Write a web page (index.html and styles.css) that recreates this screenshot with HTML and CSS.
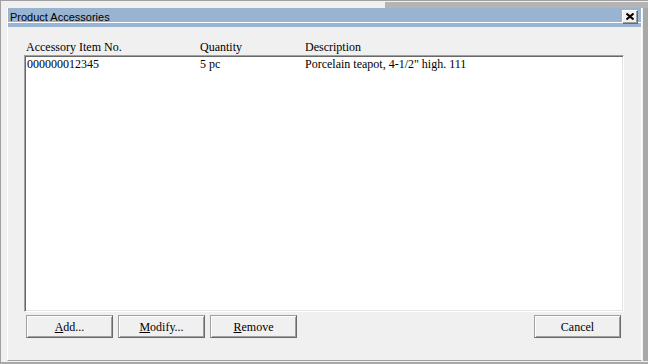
FILE: index.html
```html
<!DOCTYPE html>
<html>
<head>
<meta charset="utf-8">
<link rel="stylesheet" href="styles.css">
</head>
<body>
<div class="screen">
  <div class="topstrip"><div class="topgray"></div></div>
  <div class="row">
    <div class="win">
      <div class="titlebar">
        <span class="title">Product Accessories</span>
        <div class="close"><svg width="8" height="7" viewBox="0 0 8 7"><path d="M0.5 0.5 L7.5 6.5 M7.5 0.5 L0.5 6.5" stroke="#000" stroke-width="2" fill="none"/></svg></div>
      </div>
      <div class="content">
        <div class="cols head">
          <span class="c1">Accessory Item No.</span>
          <span class="c2">Quantity</span>
          <span class="c3">Description</span>
        </div>
        <div class="listbox">
          <div class="cols item">
            <span class="c1">000000012345</span>
            <span class="c2">5 pc</span>
            <span class="c3">Porcelain teapot, 4-1/2" high. 111</span>
          </div>
        </div>
        <div class="buttons">
          <button class="btn"><u>A</u>dd...</button>
          <button class="btn"><u>M</u>odify...</button>
          <button class="btn"><u>R</u>emove</button>
          <span class="spacer"></span>
          <button class="btn">Cancel</button>
        </div>
      </div>
    </div>
    <div class="rightband"></div>
  </div>
</div>
</body>
</html>
```

FILE: styles.css
```css
html, body {
  margin: 0;
  padding: 0;
  background: #f0f0f0;
}

.screen {
  width: 648px;
  height: 364px;
  box-sizing: border-box;
  border-top: 1px solid #a0a0a0;
  border-left: 1px solid #a0a0a0;
  border-bottom: 2px solid #a8a8a8;
  display: flex;
  flex-direction: column;
  overflow: hidden;
}

.topstrip {
  height: 7px;
  display: flex;
}

.topgray {
  margin-left: 384px;
  margin-top: 1px;
  flex: 1;
  background: #b4b4b4;
}

.row {
  display: flex;
  height: 353px;
}

.win {
  margin-left: 6px;
  margin-right: 1px;
  width: 633px;
  border-left: 1px solid #ffffff;
  border-right: 1px solid #ffffff;
  border-bottom: 1px solid #a0a0a0;
  display: flex;
  flex-direction: column;
}

.rightband {
  width: 5px;
  background: #a8a8a8;
}

.titlebar {
  height: 19px;
  background: linear-gradient(to bottom, #99b4d1 0, #99b4d1 14px, #ffffff 14px, #ffffff 15px, #99b4d1 15px);
  display: flex;
  align-items: flex-start;
}

.title {
  font-family: "Liberation Sans", Arial, sans-serif;
  font-size: 11px;
  line-height: 13px;
  padding: 3px 0 0 2px;
  color: #000;
  flex: 1;
}

.close {
  width: 16px;
  height: 14px;
  box-sizing: border-box;
  margin: 2px 3px 0 0;
  background: #f0f0f0;
  border-top: 1px solid #ffffff;
  border-left: 1px solid #ffffff;
  border-right: 1px solid #696969;
  border-bottom: 1px solid #696969;
  box-shadow: inset -1px -1px 0 #a0a0a0;
  display: flex;
  align-items: center;
  justify-content: center;
  padding: 0 1px 1px 0;
}

.close svg {
  display: block;
}

.content {
  flex: 1;
  display: flex;
  flex-direction: column;
  padding: 12px 17px 0 16px;
  font-family: "Liberation Serif", "Times New Roman", serif;
  font-size: 12px;
  color: #000;
}

.cols {
  display: grid;
  grid-template-columns: 174px 105px 1fr;
}

.head {
  line-height: 16px;
  height: 16px;
  padding-left: 2px;
}

.listbox {
  height: 257px;
  box-sizing: border-box;
  background: #ffffff;
  border-top: 1px solid #a0a0a0;
  border-left: 1px solid #a0a0a0;
  border-right: 1px solid #ffffff;
  border-bottom: 1px solid #ffffff;
  box-shadow: inset 1px 1px 0 #696969, inset -1px -1px 0 #e3e3e3;
  padding: 1px 0 0 2px;
}

.item {
  line-height: 14px;
  grid-template-columns: 173px 105px 1fr;
}

.buttons {
  display: flex;
  margin-top: 3px;
  padding: 0 3px 0 2px;
  gap: 5px;
}

.spacer {
  flex: 1;
}

.btn {
  width: 87px;
  height: 23px;
  box-sizing: border-box;
  background: #f0f0f0;
  border: 1px solid;
  border-color: #a0a0a0 #696969 #696969 #a0a0a0;
  box-shadow: inset 1px 1px 0 #ffffff, inset -1px -1px 0 #a0a0a0;
  font-family: "Liberation Serif", "Times New Roman", serif;
  font-size: 12px;
  color: #000;
  padding: 1px 0 0 0;
  margin: 0;
  line-height: 19px;
  border-radius: 0;
}
```
